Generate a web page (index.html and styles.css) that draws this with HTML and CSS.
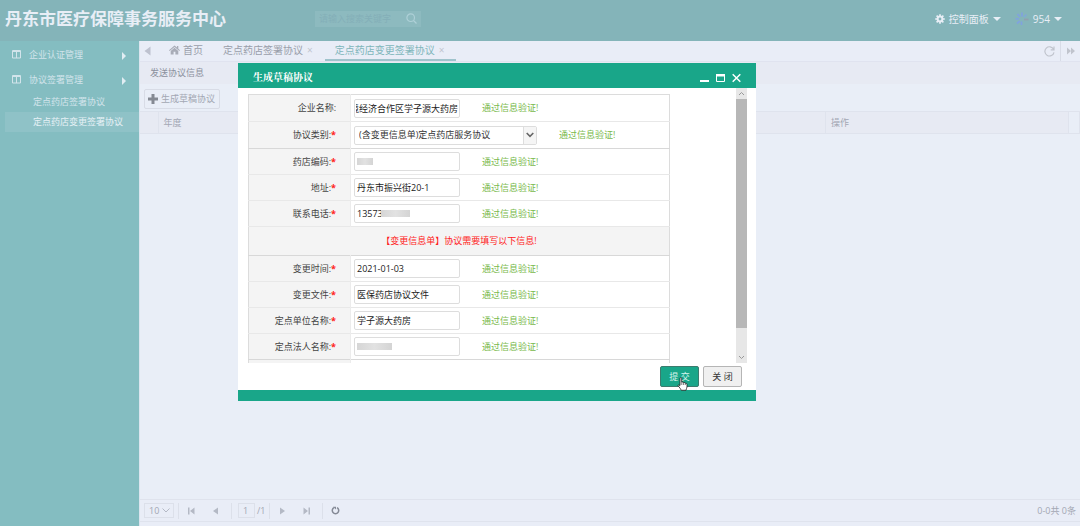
FILE: index.html
```html
<!DOCTYPE html>
<html lang="zh-CN">
<head>
<meta charset="utf-8">
<title>丹东市医疗保障事务服务中心</title>
<link rel="stylesheet" href="styles.css">
</head>
<body>
<div class="app">
  <header class="topbar">
    <h1 class="brand">丹东市医疗保障事务服务中心</h1>
    <label class="search">
      <input class="search-input" type="text" placeholder="请输入搜索关键字" aria-label="搜索">
      <svg width="11" height="11" viewBox="0 0 11 11" fill="none" stroke="currentColor" stroke-width="1.2"><circle cx="4.7" cy="4.7" r="3.8"/><path d="M7.5 7.5L10.5 10.5"/></svg>
    </label>
    <div class="top-menus">
      <button class="top-menu" type="button">
        <svg width="10" height="10" viewBox="0 0 10 10"><circle cx="5" cy="5" r="2.4" fill="none" stroke="currentColor" stroke-width="2"/><path d="M5 .2V2M5 8V9.800M.2 5H2M8 5H9.800M1.600 1.600L3 3M7 7L8.400 8.400M8.400 1.600L7 3M3 7L1.600 8.400" stroke="currentColor" stroke-width="1.700"/></svg>
        <span>控制面板</span><i class="caret"></i>
      </button>
      <button class="top-menu user" type="button">
        <svg width="14" height="14" viewBox="0 0 14 14" stroke="#80a2e0" stroke-width="1.700"><path d="M7 .5V4.500M2.500 2L5 5M.5 6.500L4 7M2 11.500L4.800 9M6.500 13V9.500"/><path d="M11.500 2.500L9 5" stroke="#80a8d8"/><path d="M9 7.500H13.500" stroke="#929fb0"/></svg>
        <span>954</span><i class="caret"></i>
      </button>
    </div>
  </header>

  <div class="workspace">
    <nav class="sidebar">
      <a class="group" href="#"><svg width="9" height="9" viewBox="0 0 9 9" fill="none" stroke="currentColor"><path d="M.5 .5H8.500V8H.5ZM.5 1.500H8.500M4.500 1V8"/></svg><span>企业认证管理</span><i class="arrow"></i></a>
      <a class="group" href="#"><svg width="9" height="9" viewBox="0 0 9 9" fill="none" stroke="currentColor"><path d="M.5 .5H8.500V8H.5ZM.5 1.500H8.500M4.500 1V8"/></svg><span>协议签署管理</span><i class="arrow"></i></a>
      <a class="leaf" href="#">定点药店签署协议</a>
      <a class="leaf active" href="#">定点药店变更签署协议</a>
    </nav>

    <main class="content">
      <div class="tabs">
        <button class="tab-scroll" type="button" aria-label="向左"><svg width="7" height="10" viewBox="0 0 7 10"><path d="M6.500 .5V9.500L.5 5Z" fill="currentColor"/></svg></button>
        <a class="tab home" href="#"><svg width="11" height="10" viewBox="0 0 11 10" fill="currentColor"><path d="M5.500 .5L0 5.200L.7 6L5.500 2L10.300 6L11 5.200L9.300 3.700V1H8V2.600Z"/><path d="M5.500 2.800L1.700 6V9.500H4.600V6.800H6.400V9.500H9.300V6Z"/></svg>首页</a>
        <a class="tab" href="#">定点药店签署协议<span class="close">×</span></a>
        <a class="tab active" href="#">定点药店变更签署协议<span class="close">×</span></a>
        <div class="tab-tools">
          <button class="tab-tool" type="button" aria-label="刷新"><svg width="11" height="11" viewBox="0 0 11 11" fill="none" stroke="currentColor" stroke-width="1.200"><path d="M9.600 3.300A4.600 4.600 0 1 0 10 6.300M10 .5V3.800H6.700"/></svg></button>
          <button class="tab-tool last" type="button" aria-label="更多"><svg width="8" height="8" viewBox="0 0 8 8" fill="currentColor"><path d="M0 .5L4 4L0 7.500ZM4 .5L8 4L4 7.500Z"/></svg></button>
        </div>
      </div>
      <h2 class="panel-title">发送协议信息</h2>
      <div class="toolbar">
        <button class="tool-button" type="button"><svg width="10" height="10" viewBox="0 0 10 10" fill="#858a93"><path d="M3.500 0H6.500V3.500H10V6.500H6.500V10H3.500V6.500H0V3.500H3.500Z"/></svg>生成草稿协议</button>
      </div>
      <table class="grid">
        <thead><tr><th class="c-index"></th><th class="c-year">年度</th><th class="c-action">操作</th><th class="c-end"></th></tr></thead>
      </table>
      <div class="grid-body"></div>
      <footer class="pager">
        <span class="select-wrap">
          <select class="page-size" aria-label="每页条数"><option>10</option></select>
          <svg class="page-chevron" width="8" height="5" viewBox="0 0 8 5" fill="none" stroke="currentColor"><path d="M.5 .5L4 4L7.500 .5"/></svg>
        </span>
        <i class="sep"></i>
        <button class="page-button" type="button" aria-label="首页"><svg width="7" height="8" viewBox="0 0 7 8" fill="currentColor"><path d="M0 .5H1.500V7.500H0ZM6.500 .5V7.500L2 4Z"/></svg></button>
        <button class="page-button" type="button" aria-label="上一页"><svg width="7" height="8" viewBox="0 0 7 8" fill="currentColor"><path d="M6 .5V7.500L1 4Z"/></svg></button>
        <i class="sep"></i>
        <input class="page-number" type="text" value="1" aria-label="页码"><span class="page-total">/1</span>
        <i class="sep"></i>
        <button class="page-button" type="button" aria-label="下一页"><svg width="7" height="8" viewBox="0 0 7 8" fill="currentColor"><path d="M1 .5V7.500L6 4Z"/></svg></button>
        <button class="page-button" type="button" aria-label="末页"><svg width="7" height="8" viewBox="0 0 7 8" fill="currentColor"><path d="M5.500 .5H7V7.500H5.500ZM.5 .5V7.500L5 4Z"/></svg></button>
        <i class="sep"></i>
        <button class="page-button reload" type="button" aria-label="刷新"><svg width="9" height="9" viewBox="0 0 9 9" fill="none" stroke="currentColor" stroke-width="1.500"><path d="M3 1.700A3.200 3.200 0 1 0 6 1.700"/><path d="M2 .8H5V3.600Z" fill="currentColor" stroke="none"/></svg></button>
        <span class="summary">0-0共 0条</span>
      </footer>
    </main>
  </div>
</div>

<section class="dialog" role="dialog" aria-labelledby="dialog-title">
  <header class="dialog-head">
    <h2 id="dialog-title">生成草稿协议</h2>
    <div class="window-buttons">
      <button type="button" aria-label="最小化"><svg width="9" height="10" viewBox="0 0 9 10"><path d="M0 7H9V9H0Z" fill="currentColor"/></svg></button>
      <button type="button" aria-label="最大化"><svg width="9" height="10" viewBox="0 0 9 10"><path d="M.5 2H8.500V8.500H.5Z" fill="none" stroke="currentColor"/><path d="M0 1H9V3.500H0Z" fill="currentColor"/></svg></button>
      <button type="button" aria-label="关闭"><svg width="9" height="10" viewBox="0 0 9 10" fill="none" stroke="currentColor" stroke-width="1.500"><path d="M.7 1.200L8.300 8.800M8.300 1.200L.7 8.800"/></svg></button>
    </div>
  </header>
  <form class="dialog-form">
    <div class="scroll-view">
      <table class="fields">
        <tbody>
          <tr class="tall"><th><label for="f1">企业名称:</label></th><td><input id="f1" class="field long-value" value="边境经济合作区学子源大药房"><span class="ok">通过信息验证!</span></td></tr>
          <tr class="tall strong"><th><label for="f2">协议类别:<b>*</b></label></th><td><span class="select-wrap"><select id="f2" class="field pick"><option>(含变更信息单)定点药店服务协议</option></select><span class="pick-button"><svg width="8" height="6" viewBox="0 0 8 6" fill="none" stroke="#666" stroke-width="1.600"><path d="M.7 1L4 4.300L7.300 1"/></svg></span></span><span class="ok">通过信息验证!</span></td></tr>
          <tr><th><label for="f3">药店编码:<b>*</b></label></th><td><span class="masked"><input id="f3" class="field"><i class="mask code"></i></span><span class="ok">通过信息验证!</span></td></tr>
          <tr><th><label for="f4">地址:<b>*</b></label></th><td><input id="f4" class="field" value="丹东市振兴街20-1"><span class="ok">通过信息验证!</span></td></tr>
          <tr><th><label for="f5">联系电话:<b>*</b></label></th><td><span class="masked"><input id="f5" class="field" value="13573"><i class="mask phone"></i></span><span class="ok">通过信息验证!</span></td></tr>
          <tr class="notice strong"><td colspan="2">【变更信息单】协议需要填写以下信息!</td></tr>
          <tr><th><label for="f6">变更时间:<b>*</b></label></th><td><input id="f6" class="field" value="2021-01-03"><span class="ok">通过信息验证!</span></td></tr>
          <tr><th><label for="f7">变更文件:<b>*</b></label></th><td><input id="f7" class="field" value="医保药店协议文件"><span class="ok">通过信息验证!</span></td></tr>
          <tr><th><label for="f8">定点单位名称:<b>*</b></label></th><td><input id="f8" class="field" value="学子源大药房"><span class="ok">通过信息验证!</span></td></tr>
          <tr class="strong"><th><label for="f9">定点法人名称:<b>*</b></label></th><td><span class="masked"><input id="f9" class="field"><i class="mask person"></i></span><span class="ok">通过信息验证!</span></td></tr>
          <tr><th></th><td></td></tr>
        </tbody>
      </table>
      <div class="scrollbar">
        <svg width="11" height="11" viewBox="0 0 11 11" fill="none" stroke="#999"><path d="M3 7L5.500 4.500L8 7"/></svg>
        <i class="thumb"></i>
        <svg width="11" height="11" viewBox="0 0 11 11" fill="none" stroke="#999"><path d="M3 4L5.500 6.500L8 4"/></svg>
      </div>
    </div>
    <div class="actions">
      <button class="action submit" type="button">提 交<svg class="cursor" width="11" height="14" viewBox="0 0 11 14"><path d="M3 8.500V1.500Q3 .6 3.800 .6T4.700 1.500V5Q6.300 4.700 6.600 5.500Q8 5.200 8.300 6.200Q10 6 10 7.500V10Q9.500 11.500 9 13.300H4.300Q3.500 11.500 1 8.600Q.7 7.300 3 8.500Z" fill="#fff" stroke="#222" stroke-width=".8"/><path d="M4.800 8V5M6.600 8V5.500M8.300 8V6.300" stroke="#222" stroke-width=".6"/></svg></button>
      <button class="action" type="button">关 闭</button>
    </div>
  </form>
  <div class="dialog-foot"></div>
</section>
</body>
</html>
```
FILE: styles.css
```css
* { box-sizing: border-box; }
body {
  margin: 0;
  color: #a3a7b3;
  background: #e9edf7;
  font: 9px/12px "Open Sans", "Noto Sans CJK SC", sans-serif;
}
button, input, select { margin: 0; padding: 0; border: 0; background: none; color: inherit; font: inherit; }
a { color: inherit; text-decoration: none; }
h1, h2 { margin: 0; }
svg { display: block; flex: none; }

.app { display: flex; flex-direction: column; min-height: 100vh; }
.topbar { display: flex; align-items: center; height: 41px; padding: 0 18px 4px 5px; background: #84b4b9; color: #e8eef6; }
.brand { flex: none; width: 310px; font-size: 17px; line-height: 24px; }
.search { display: flex; align-items: center; width: 106px; height: 16px; padding: 0 4px; background: #8dbabf; color: #aed0d7; }
.search-input { flex: 1; min-width: 0; outline: 0; }
.search-input::placeholder { color: #84afb8; opacity: 1; }
.top-menus { display: flex; gap: 14px; margin-left: auto; }
.top-menu { display: flex; align-items: center; gap: 4px; font-size: 10px; }
.caret { border: 4px solid transparent; border-top-color: currentColor; border-bottom: 0; }

.workspace { display: flex; flex: 1; }
.sidebar { flex: none; width: 139px; padding-top: 1px; background: #84bdc1; color: #d2e4eb; }
.group { display: flex; align-items: center; gap: 8px; height: 25px; padding: 0 13px 0 12px; }
.arrow { margin: 3px 0 0 auto; border: 4px solid transparent; border-left-color: #e1edf3; border-right: 0; }
.leaf { display: block; height: 20px; margin-left: 5px; padding: 4px 0 4px 28px; }
.leaf.active { background: #8fc2c7; color: #e6f1f6; }

.content { display: flex; flex: 1; flex-direction: column; min-width: 0; border-left: 1px solid #dbe5ef; }
.tabs { display: flex; height: 21px; border-bottom: 1px solid #e0e3ef; color: #999eaa; font-size: 10px; line-height: 18px; }
.tab-scroll { width: 16px; padding-left: 4px; color: #bec2cf; }
.tab { display: flex; align-items: center; gap: 4px; padding: 0 12px 0 10px; border-bottom: 2px solid transparent; }
.home { gap: 3px; padding: 0 10px 0 13px; }
.home svg { color: #a8acb7; }
.tab.active { color: #80b6bb; border-color: #9fc3cc; }
.close { color: #c1c5d0; }
.tab-tools { display: flex; margin-left: auto; }
.tab-tool { display: grid; place-items: center; width: 22px; color: #c0c4cd; }
.tab-tool.last { width: 20px; border-left: 1px solid #d8dce7; }
.panel-title { padding: 5px 10px; background: #e7eaf3; color: #8b909d; font-size: 9px; font-weight: 400; line-height: 12px; }
.toolbar { padding: 5px 4px 2px; background: #e9eef7; }
.tool-button { display: flex; align-items: center; gap: 3px; height: 20px; padding: 0 4px 0 3px; border: 1px solid #d8dce6; border-radius: 2px; }
.grid { width: 100%; border-collapse: collapse; table-layout: fixed; }
.grid th { height: 22px; padding: 0 5px; border: solid #dfe3ed; border-width: 1px 1px 1px 0; background: #e7eaf3; font-weight: 400; text-align: left; }
.c-index { width: 18px; }
.c-action { width: 243px; }
.grid .c-end { width: 10px; background: #e9eef7; }
.grid-body { flex: 1; background: #e9eef7; }
.pager { display: flex; align-items: center; height: 23px; margin-bottom: 4px; padding: 0 4px; border: solid #dfe3ed; border-width: 1px 0; }
.select-wrap { position: relative; display: inline-block; vertical-align: middle; }
.page-size { display: block; appearance: none; width: 30px; height: 15px; padding-left: 4px; border: 1px solid #dce0ea; }
.page-chevron { position: absolute; top: 5px; right: 4px; color: #b4b9c5; pointer-events: none; }
.page-button { display: grid; place-items: center; width: 24px; height: 16px; color: #b4b9c5; }
.page-button.reload { color: #858a96; }
.sep { width: 1px; height: 16px; margin-left: 4px; background: #dce0ea; }
.page-number { width: 17px; height: 15px; margin-left: 6px; border: 1px solid #dce0ea; padding-left: 4px; }
.page-total { padding-left: 2px; }
.summary { margin-left: auto; }

.dialog { position: absolute; top: 63px; left: calc(50% - 302px); width: 518px; background: #fff; color: #444; }
.dialog-head { display: flex; align-items: center; justify-content: space-between; height: 25px; padding: 4px 15px 0; background: #19a689; color: #fff; }
.dialog-head h2 { font: bold 10px/14px "Liberation Serif", "Noto Serif CJK SC", "Noto Sans CJK SC", serif; }
.window-buttons { display: flex; gap: 7px; }
.scroll-view { display: flex; align-items: flex-start; justify-content: space-between; height: 275px; padding: 0 9px 0 10px; overflow: hidden; }
.fields { width: 422px; margin-top: 6px; border: 1px solid #dcdcdc; border-collapse: collapse; table-layout: fixed; }
.fields tr { height: 26px; border-bottom: 1px solid #e8e8e8; }
.fields tr.tall { height: 27px; }
.fields tr.strong { border-bottom-color: #d8d8d8; }
.fields th { width: 102px; padding: 0 14px 0 0; border-right: 1px solid #ececec; background: #f4f4f4; font-weight: 400; text-align: right; }
.fields td { padding: 0 3px; font-size: 0; }
.fields .notice { height: 29px; }
.fields .notice td { background: #f4f4f4; color: #f22; font-size: 9px; text-align: center; }
.fields b { color: #f22; font-weight: 700; }
.field { width: 106px; height: 19px; padding: 0 2px; border: 1px solid #ddd; border-radius: 2px; background: #fff; color: #222; font-size: 9px; vertical-align: middle; }
.long-value { direction: rtl; padding: 0 1px; }
.pick { display: block; appearance: none; width: 183px; padding-left: 4px; color: #333; }
.pick-button { position: absolute; top: 1px; right: 1px; display: grid; place-items: center; width: 13px; height: 17px; border-left: 1px solid #ddd; background: #f5f5f5; pointer-events: none; }
.ok { margin-left: 22px; color: #78b94b; font-size: 9px; vertical-align: middle; }
.masked { position: relative; display: inline-block; vertical-align: middle; }
.mask { position: absolute; top: 6px; left: 3px; height: 7px; background: linear-gradient(90deg, #d6d6d6, #e2e2e2 50%, #d4d4d4); }
.code { width: 16px; }
.phone { left: 27px; width: 29px; }
.person { width: 35px; }
.scrollbar { display: flex; flex-direction: column; width: 11px; height: 275px; background: #e7e7e7; }
.thumb { height: 229px; background: #b7b7b7; }
.scrollbar svg:last-child { margin-top: auto; }
.actions { display: flex; justify-content: flex-end; gap: 4px; height: 27px; padding: 3px 14px 3px; }
.action { position: relative; width: 39px; height: 21px; border: 1px solid #b5b5b5; border-radius: 2px; background: #f0f0f0; color: #333; }
.submit { border-color: #3c7b6e; background: #19a689; color: #d5f5ee; }
.cursor { position: absolute; top: 10px; left: 16px; }
.dialog-foot { height: 11px; background: #19a689; }
```
